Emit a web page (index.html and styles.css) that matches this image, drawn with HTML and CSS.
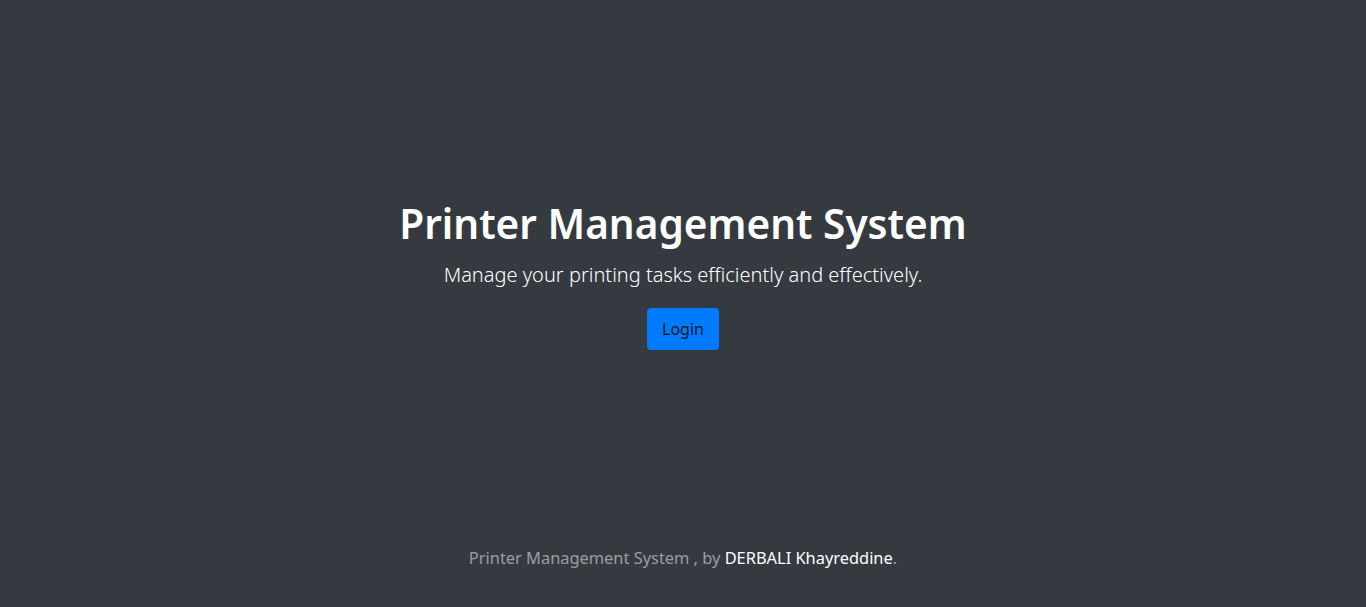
FILE: index.html
```html
<!DOCTYPE html>
<html lang="en">
<head>
<meta charset="utf-8">
<title>Printer Management System</title>
<link rel="stylesheet" href="styles.css">
</head>
<body>
<div class="cover">
  <main class="hero">
    <h1 class="hero-title">Printer Management System</h1>
    <p class="hero-lead">Manage your printing tasks efficiently and effectively.</p>
    <div class="hero-actions"><a class="btn-login" href="#">Login</a></div>
  </main>
  <footer class="site-footer">
    <p>Printer Management System , by <a href="#" class="footer-link">DERBALI Khayreddine</a>.</p>
  </footer>
</div>
</body>
</html>
```
FILE: styles.css
```css
html, body {
  margin: 0;
  padding: 0;
  height: 100%;
}
body {
  background: #343a40;
  color: #ffffff;
  font-family: "Noto Sans", "Open Sans", sans-serif;
}
.cover {
  display: flex;
  flex-direction: column;
  height: 100vh;
}
.hero {
  flex: 1;
  display: flex;
  flex-direction: column;
  align-items: center;
  justify-content: center;
  text-align: center;
  padding-top: 4px;
}
.hero-title {
  margin: 0 0 12px;
  font-size: 40.55px;
  font-weight: 600;
  line-height: 48px;
}
.hero-lead {
  margin: 0 0 18px;
  font-size: 20px;
  font-weight: 300;
  line-height: 30px;
}
.hero-actions {
  display: flex;
  justify-content: center;
}
.btn-login {
  display: inline-block;
  padding: 9px 15px;
  font-size: 16px;
  line-height: 24px;
  color: #14171a;
  background: #007bff;
  border-radius: 4px;
  text-decoration: none;
}
.site-footer {
  padding-bottom: 37px;
  text-align: center;
  color: rgba(255, 255, 255, 0.5);
  font-size: 16.4px;
  line-height: 24px;
}
.site-footer p {
  margin: 0;
}
.footer-link {
  color: #ffffff;
  text-decoration: none;
}
```
